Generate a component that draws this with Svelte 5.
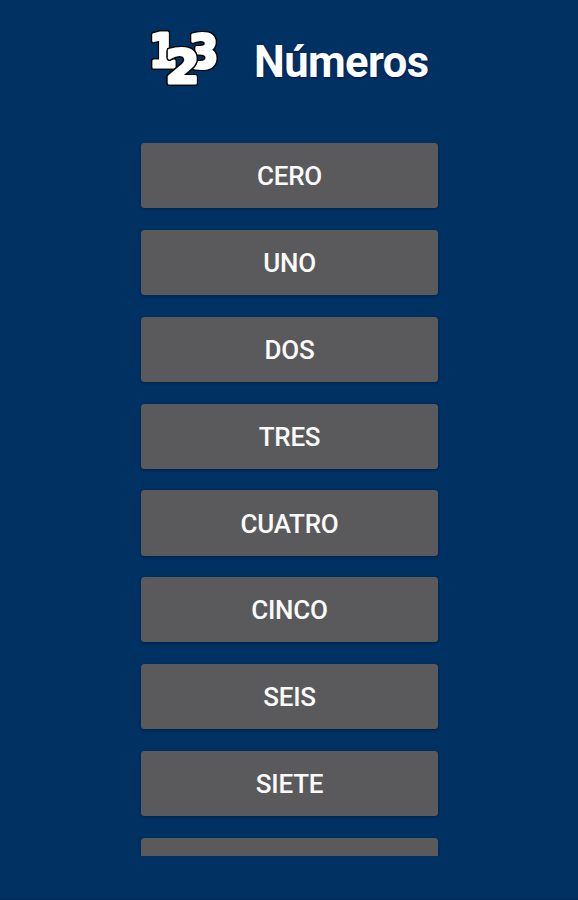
<script>
  const numbers = ['Cero', 'Uno', 'Dos', 'Tres', 'Cuatro', 'Cinco', 'Seis', 'Siete', 'Ocho'];
  const digits = [
    { value: '1', x: 4, y: 40, width: 28 },
    { value: '3', x: 43.6, y: 40.6, width: 30 },
    { value: '2', x: 20.6, y: 55.8, width: 34 }
  ];
</script>

<main>
  <header>
    <svg width="78" height="64" viewBox="0 0 78 64" aria-hidden="true">
      {#each digits as d}
        <text x={d.x} y={d.y} textLength={d.width} lengthAdjust="spacingAndGlyphs">{d.value}</text>
      {/each}
    </svg>
    <h1>Números</h1>
  </header>
  <div class="list">
    {#each numbers as n}
      <button>{n}</button>
    {/each}
  </div>
</main>

<style>
  :global(body) {
    margin: 0;
    background: #003163;
  }
  main {
    box-sizing: border-box;
    height: 900px;
    overflow: hidden;
    background: #003163;
    border-bottom: 1px solid #002654;
    font-family: Roboto, sans-serif;
  }
  header {
    display: flex;
    height: 143px;
    box-sizing: border-box;
    padding: 27px 0 0 145px;
  }
  svg {
    flex: none;
    overflow: visible;
  }
  text {
    font-family: "DejaVu Sans", sans-serif;
    font-weight: bold;
    font-size: 46.5px;
    fill: #fff;
    stroke: #fff;
    stroke-width: 3px;
    stroke-linejoin: round;
    filter: drop-shadow(1px 0 0 #080808) drop-shadow(-1px 0 0 #080808)
      drop-shadow(0 1px 0 #080808) drop-shadow(0 -1px 0 #080808)
      drop-shadow(0 0 0.5px #080808);
  }
  h1 {
    margin: 10px 0 0 31px;
    font-size: 43.5px;
    line-height: 52px;
    font-weight: 700;
    letter-spacing: -0.55px;
    color: #fff;
    text-shadow: 0 1px 2px #001048;
  }
  .list {
    box-sizing: border-box;
    display: flex;
    flex-direction: column;
    align-items: center;
    gap: 21.6px;
    height: 713px;
    overflow: hidden;
    padding-left: 1px;
  }
  button {
    flex: none;
    width: 296.5px;
    height: 65.25px;
    padding: 1px 0 0;
    border: 0;
    border-radius: 3.5px;
    background: #5a5a5c;
    color: #fafafa;
    font: 500 26px/32px Roboto, sans-serif;
    letter-spacing: -0.25px;
    text-transform: uppercase;
    box-shadow: 0 1px 3px rgba(0, 15, 35, 0.45);
  }
</style>
